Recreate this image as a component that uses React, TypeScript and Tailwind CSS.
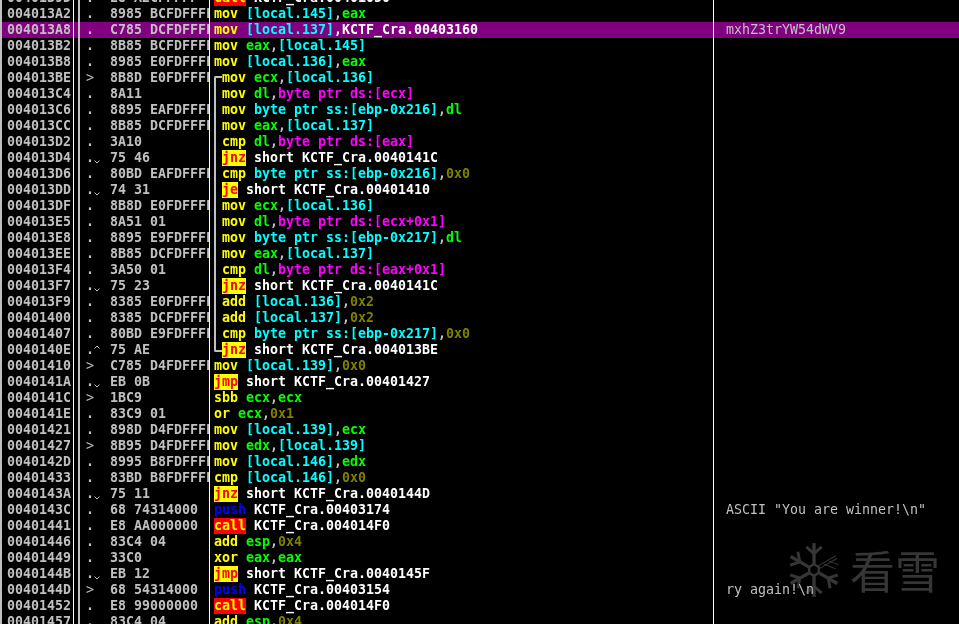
import * as React from "react";

type Token = [string, string];

const Y = "text-[#ffff00]";
const C = "text-[#00ffff]";
const G = "text-[#00ff00]";
const M = "text-[#ff00ff]";
const W = "text-white";
const D = "text-[#c0c0c0]";
const O = "text-[#808000]";
const B = "text-[#0000ff]";
const JUMP = "bg-[#ffff00] text-[#ff0000]";
const CALL = "bg-[#ff0000] text-[#ffff00]";

interface IRow {
  addr: string;
  mark?: "." | ">" | "v" | "^";
  hex: string;
  code: Token[];
  indent?: boolean;
  comment?: string;
  active?: boolean;
}

const short = (op: string, target: string, cls = JUMP): Token[] => [
  [op, cls],
  [" short KCTF_Cra." + target, W],
];

const call = (target: string): Token[] => [
  ["call", CALL],
  [" KCTF_Cra." + target, W],
];

const push = (target: string): Token[] => [
  ["push", B],
  [" KCTF_Cra." + target, W],
];

const rows: IRow[] = [
  { addr: "0040139D", mark: ".", hex: "E8 A2CFFFFF", code: call("00401050") },
  { addr: "004013A2", mark: ".", hex: "8985 BCFDFFFF", code: [["mov", Y], [" [local.145]", C], [",", D], ["eax", G]] },
  { addr: "004013A8", mark: ".", hex: "C785 DCFDFFFF", code: [["mov", Y], [" [local.137]", C], [",KCTF_Cra.00403160", W]], comment: "mxhZ3trYW54dWV9", active: true },
  { addr: "004013B2", mark: ".", hex: "8B85 BCFDFFFF", code: [["mov", Y], [" eax", G], [",", D], ["[local.145]", C]] },
  { addr: "004013B8", mark: ".", hex: "8985 E0FDFFFF", code: [["mov", Y], [" [local.136]", C], [",", D], ["eax", G]] },
  { addr: "004013BE", mark: ">", hex: "8B8D E0FDFFFF", indent: true, code: [["mov", Y], [" ecx", G], [",", D], ["[local.136]", C]] },
  { addr: "004013C4", mark: ".", hex: "8A11", indent: true, code: [["mov", Y], [" dl", G], [",", D], ["byte ptr ds:[ecx]", M]] },
  { addr: "004013C6", mark: ".", hex: "8895 EAFDFFFF", indent: true, code: [["mov", Y], [" byte ptr ss:[ebp-0x216]", C], [",", D], ["dl", G]] },
  { addr: "004013CC", mark: ".", hex: "8B85 DCFDFFFF", indent: true, code: [["mov", Y], [" eax", G], [",", D], ["[local.137]", C]] },
  { addr: "004013D2", mark: ".", hex: "3A10", indent: true, code: [["cmp", Y], [" dl", G], [",", D], ["byte ptr ds:[eax]", M]] },
  { addr: "004013D4", mark: "v", hex: "75 46", indent: true, code: short("jnz", "0040141C") },
  { addr: "004013D6", mark: ".", hex: "80BD EAFDFFFF 00", indent: true, code: [["cmp", Y], [" byte ptr ss:[ebp-0x216]", C], [",", D], ["0x0", O]] },
  { addr: "004013DD", mark: "v", hex: "74 31", indent: true, code: short("je", "00401410") },
  { addr: "004013DF", mark: ".", hex: "8B8D E0FDFFFF", indent: true, code: [["mov", Y], [" ecx", G], [",", D], ["[local.136]", C]] },
  { addr: "004013E5", mark: ".", hex: "8A51 01", indent: true, code: [["mov", Y], [" dl", G], [",", D], ["byte ptr ds:[ecx+0x1]", M]] },
  { addr: "004013E8", mark: ".", hex: "8895 E9FDFFFF", indent: true, code: [["mov", Y], [" byte ptr ss:[ebp-0x217]", C], [",", D], ["dl", G]] },
  { addr: "004013EE", mark: ".", hex: "8B85 DCFDFFFF", indent: true, code: [["mov", Y], [" eax", G], [",", D], ["[local.137]", C]] },
  { addr: "004013F4", mark: ".", hex: "3A50 01", indent: true, code: [["cmp", Y], [" dl", G], [",", D], ["byte ptr ds:[eax+0x1]", M]] },
  { addr: "004013F7", mark: "v", hex: "75 23", indent: true, code: short("jnz", "0040141C") },
  { addr: "004013F9", mark: ".", hex: "8385 E0FDFFFF 02", indent: true, code: [["add", Y], [" [local.136]", C], [",", D], ["0x2", O]] },
  { addr: "00401400", mark: ".", hex: "8385 DCFDFFFF 02", indent: true, code: [["add", Y], [" [local.137]", C], [",", D], ["0x2", O]] },
  { addr: "00401407", mark: ".", hex: "80BD E9FDFFFF 00", indent: true, code: [["cmp", Y], [" byte ptr ss:[ebp-0x217]", C], [",", D], ["0x0", O]] },
  { addr: "0040140E", mark: "^", hex: "75 AE", indent: true, code: short("jnz", "004013BE") },
  { addr: "00401410", mark: ">", hex: "C785 D4FDFFFF", code: [["mov", Y], [" [local.139]", C], [",", D], ["0x0", O]] },
  { addr: "0040141A", mark: "v", hex: "EB 0B", code: short("jmp", "00401427") },
  { addr: "0040141C", mark: ">", hex: "1BC9", code: [["sbb", Y], [" ecx", G], [",", D], ["ecx", G]] },
  { addr: "0040141E", mark: ".", hex: "83C9 01", code: [["or", Y], [" ecx", G], [",", D], ["0x1", O]] },
  { addr: "00401421", mark: ".", hex: "898D D4FDFFFF", code: [["mov", Y], [" [local.139]", C], [",", D], ["ecx", G]] },
  { addr: "00401427", mark: ">", hex: "8B95 D4FDFFFF", code: [["mov", Y], [" edx", G], [",", D], ["[local.139]", C]] },
  { addr: "0040142D", mark: ".", hex: "8995 B8FDFFFF", code: [["mov", Y], [" [local.146]", C], [",", D], ["edx", G]] },
  { addr: "00401433", mark: ".", hex: "83BD B8FDFFFF 00", code: [["cmp", Y], [" [local.146]", C], [",", D], ["0x0", O]] },
  { addr: "0040143A", mark: "v", hex: "75 11", code: short("jnz", "0040144D") },
  { addr: "0040143C", mark: ".", hex: "68 74314000", code: push("00403174"), comment: 'ASCII "You are winner!\\n"' },
  { addr: "00401441", mark: ".", hex: "E8 AA000000", code: call("004014F0") },
  { addr: "00401446", mark: ".", hex: "83C4 04", code: [["add", Y], [" esp", G], [",", D], ["0x4", O]] },
  { addr: "00401449", mark: ".", hex: "33C0", code: [["xor", Y], [" eax", G], [",", D], ["eax", G]] },
  { addr: "0040144B", mark: "v", hex: "EB 12", code: short("jmp", "0040145F") },
  { addr: "0040144D", mark: ">", hex: "68 54314000", code: push("00403154"), comment: "ry again!\\n" },
  { addr: "00401452", mark: ".", hex: "E8 99000000", code: call("004014F0") },
  { addr: "00401457", mark: ".", hex: "83C4 04", code: [["add", Y], [" esp", G], [",", D], ["0x4", O]] },
];

function Mark({ mark }: { mark: IRow["mark"] }) {
  if (mark === ">") {
    return <span className="font-normal text-[#c0c0c0]">&gt;</span>;
  }
  return (
    <span className="relative block">
      <span className="text-[#c0c0c0]">.</span>
      {mark === "v" && (
        <svg className="absolute left-[8px] top-[10px]" width="6" height="4" viewBox="0 0 6 4" fill="none" stroke="#c0c0c0">
          <path d="M0.5 0.5 L3 3 L5.5 0.5" />
        </svg>
      )}
      {mark === "^" && (
        <svg className="absolute left-[8px] top-[3px]" width="6" height="4" viewBox="0 0 6 4" fill="none" stroke="#c0c0c0">
          <path d="M0.5 3.5 L3 1 L5.5 3.5" />
        </svg>
      )}
    </span>
  );
}

function Row({ row }: { row: IRow }) {
  const bg = row.active ? "bg-[#800080]" : "";
  return (
    <div className="flex h-4 leading-4 whitespace-pre">
      <div className="w-[2px] shrink-0 bg-[#c0c0c0]" />
      <div className={`w-[72px] shrink-0 border-r border-white pl-[5px] text-[#c0c0c0] ${bg}`}>{row.addr}</div>
      <div className={`w-[4px] shrink-0 ${bg}`} />
      <div className={`flex w-[132px] shrink-0 overflow-hidden border-l-2 border-r border-[#c0c0c0] border-r-white text-[#c0c0c0] ${bg}`}>
        <div className="w-[30px] shrink-0 pl-[6px]">
          <Mark mark={row.mark} />
        </div>
        <div>{row.hex}</div>
      </div>
      <div className={`w-[504px] shrink-0 overflow-hidden border-r border-white ${row.indent ? "pl-3" : "pl-1"} ${bg}`}>
        {row.code.map(([text, cls], i) => {
          const boxed = cls === JUMP || cls === CALL;
          return (
            <span key={i} className={`${cls} ${boxed ? "inline-block h-4" : ""}`}>
              {text}
            </span>
          );
        })}
      </div>
      <div className={`min-w-0 flex-1 pl-3 font-normal text-[#c0c0c0] ${bg}`}>{row.comment}</div>
    </div>
  );
}

// five heavy arms, the upper right one is only hairlines in the logo
function Snowflake() {
  const arm = (
    <>
      <path d="M25 20 V-2" strokeWidth="3.5" />
      <path d="M25 9 L17 2 M25 9 L33 2" strokeWidth="3" />
    </>
  );
  return (
    <svg width="50" height="60" viewBox="-1 -4 52 60" fill="none" stroke="#363636">
      {[0, 120, 180, 240, 300].map((deg) => (
        <g key={deg} transform={`rotate(${deg} 25 26)`}>
          {arm}
        </g>
      ))}
      <g transform="rotate(60 25 26)" strokeWidth="1">
        <path d="M23.5 20 V-1 M26.5 20 V-1" />
        <path d="M25 8 L33 1 M25 14 L35 6" />
      </g>
      <path d="M25 20 L30 23 V29 L25 32 L20 29 V23 Z" strokeWidth="2.5" />
    </svg>
  );
}

export default function App() {
  return (
    <div className="relative h-[624px] w-[959px] overflow-hidden bg-black font-['DejaVu_Sans_Mono',monospace] text-[13.29px] font-bold">
      <div className="mt-[-10px]">
        {rows.map((row) => (
          <Row key={row.addr} row={row} />
        ))}
      </div>
      {/* loop bracket */}
      <div className="absolute left-[214px] top-[76px] h-[276px] w-[8px] rounded-l-[2px] border-y-2 border-l-2 border-[#c0c0c0]" />
      {/* watermark */}
      <div className="absolute left-[789px] top-[540px] flex items-center gap-[11px] mix-blend-lighten">
        <Snowflake />
        <span className="font-['Noto_Sans_CJK_SC',sans-serif] text-[45px] leading-[52px] font-normal text-[#363636]">看雪</span>
      </div>
    </div>
  );
}
